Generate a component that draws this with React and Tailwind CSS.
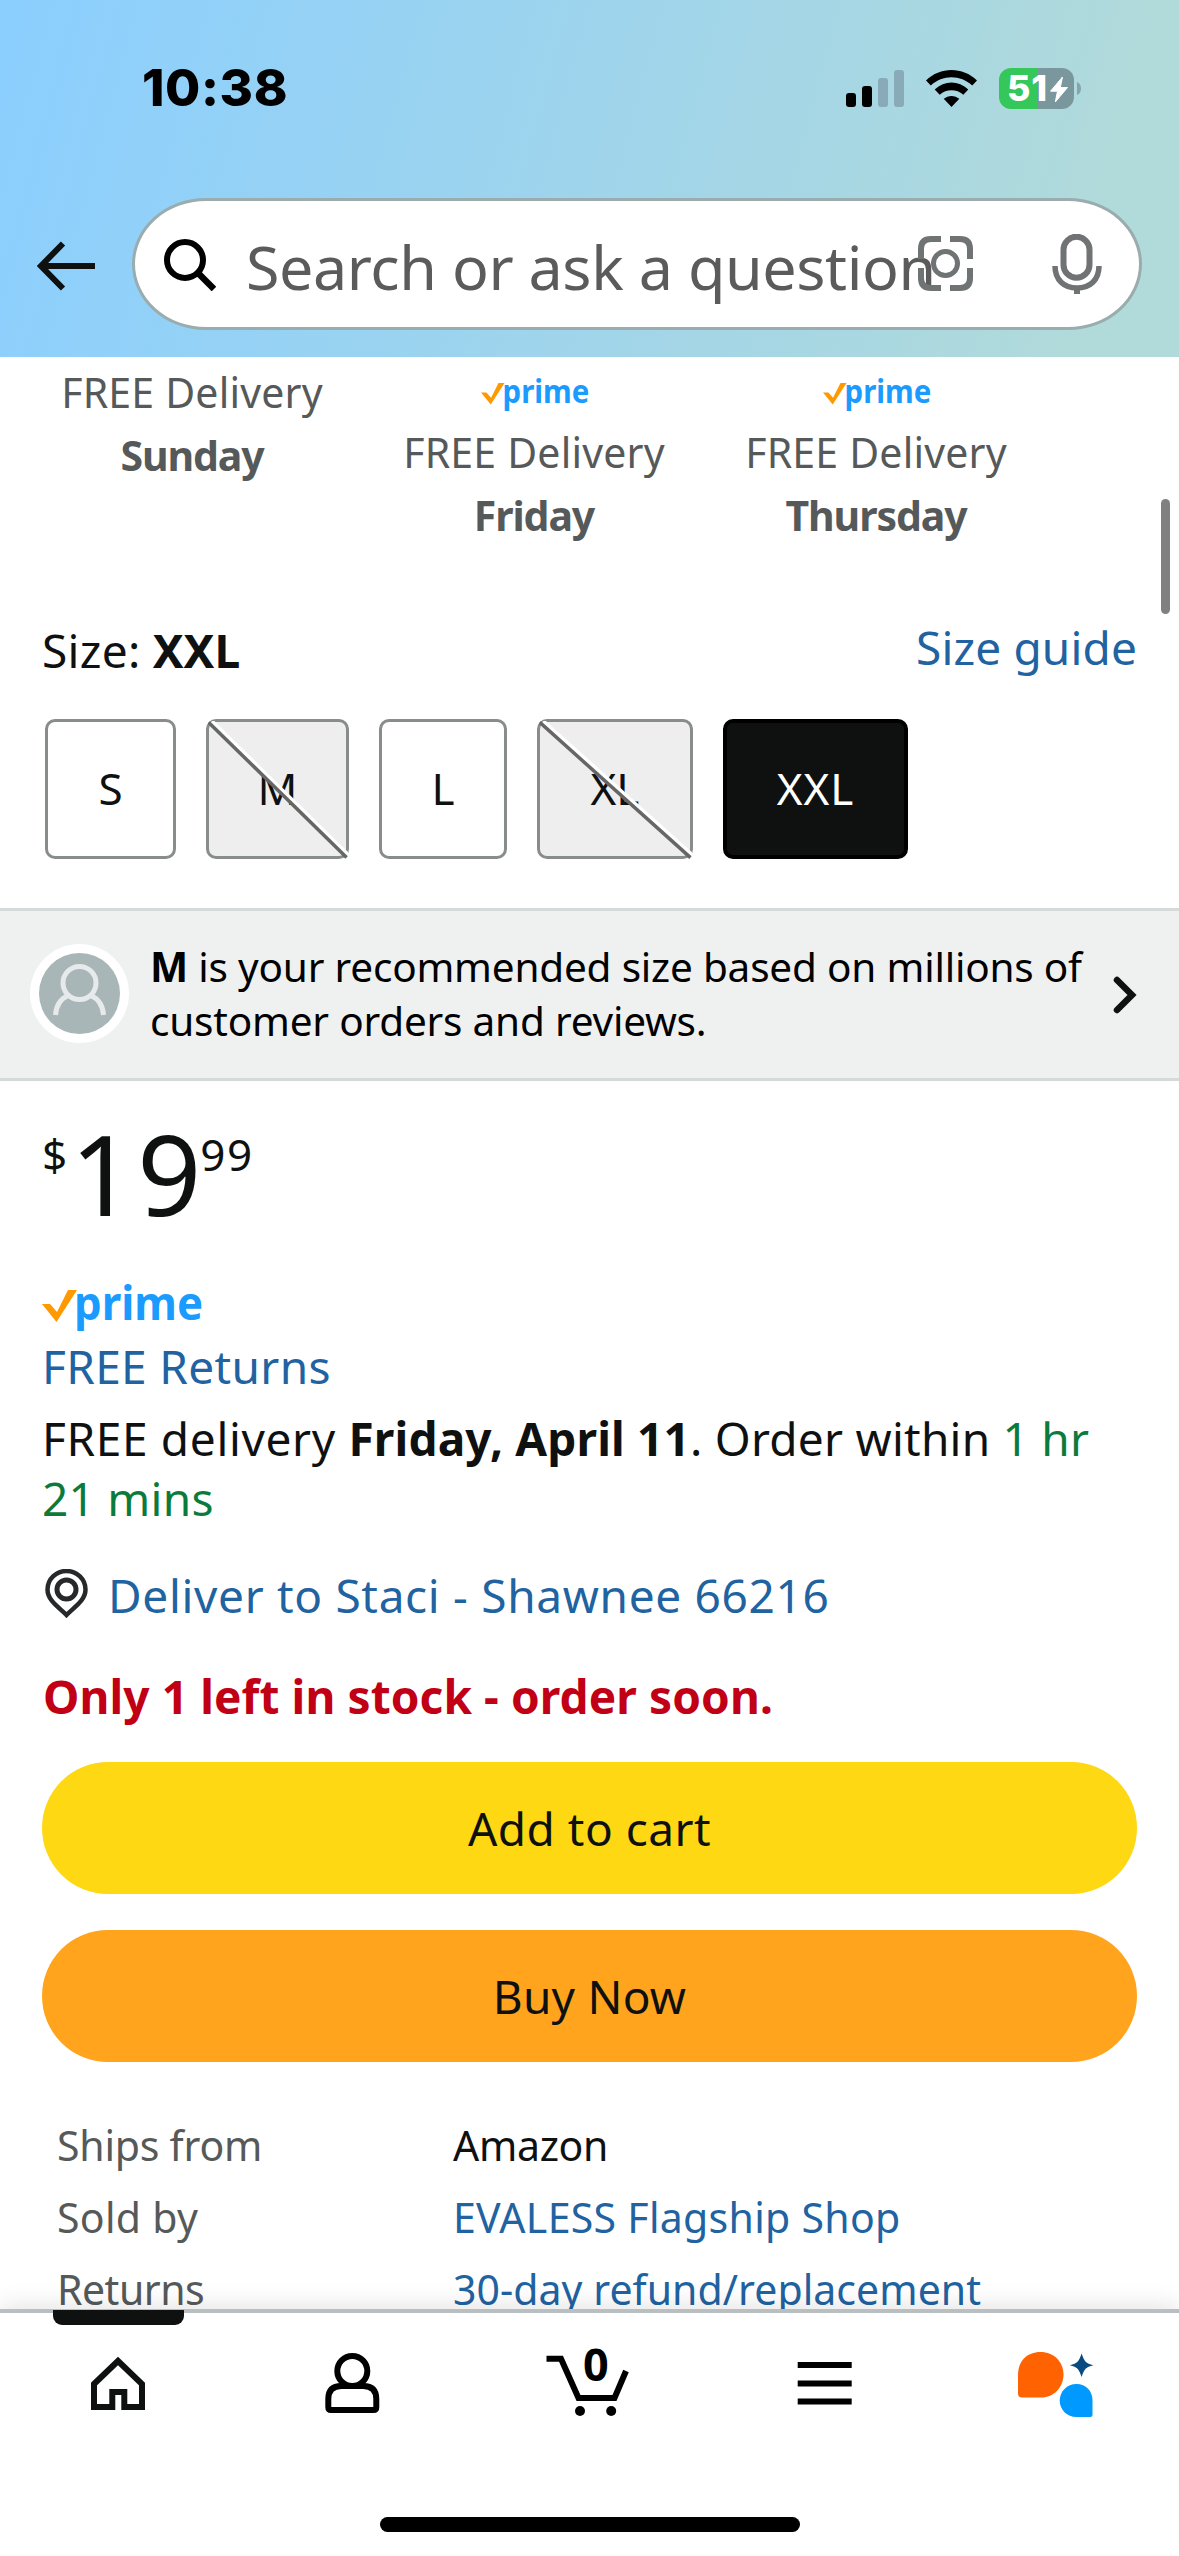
const sizes = [
  { label: 'S', width: 'w-[131px]', state: 'available' },
  { label: 'M', width: 'w-[143px]', state: 'unavailable' },
  { label: 'L', width: 'w-[128px]', state: 'available' },
  { label: 'XL', width: 'w-[156px]', state: 'unavailable' },
  { label: 'XXL', width: 'w-[185px]', state: 'selected' },
];

const sizeStyles = {
  available: 'border-[3px] border-[#888c8c] bg-white text-[#0f1111]',
  unavailable: 'border-[3px] border-[#888c8c] bg-[#eeeeee] text-[#0f1111]',
  selected: 'border-4 border-black bg-[#0f1111] text-white tracking-[1px]',
};

function PrimeLogo({ className }) {
  return (
    <svg className={`overflow-visible ${className}`} viewBox="0 0 159 46">
      <path d="M0 20h8l7 8L26 6h9L14.500 38z" fill="#ff9900" />
      <text
        x="32"
        y="36"
        fontFamily="'Noto Sans', sans-serif"
        fontWeight="700"
        fontSize="47"
        fill="#1c9bff"
        textLength="129"
        lengthAdjust="spacingAndGlyphs"
      >
        prime
      </text>
    </svg>
  );
}

function StatusBar() {
  return (
    <div className="flex h-[60px] items-center pl-[142px] pr-[98px]">
      <span className="font-['Inter',sans-serif] text-[51px] font-extrabold leading-[60px] tracking-[0.6px] text-black">10:38</span>
      <svg className="ml-auto h-[37px] w-[58px]" viewBox="0 0 58 37">
        <rect x="0" y="23" width="10" height="14" rx="3" />
        <rect x="16" y="16" width="10" height="21" rx="3" />
        <rect x="32" y="8" width="10" height="29" rx="3" fill="#88abb7" />
        <rect x="48" y="0" width="10" height="37" rx="3" fill="#88abb7" />
      </svg>
      <svg className="ml-[22px] h-[37px] w-[51px]" viewBox="0 0 51 37">
        <path d="M0 10.500C14-3.500 37-3.500 51 10.500L46.200 15.500C34.500 4.500 16.500 4.500 4.800 15.500z" />
        <path d="M8.700 19.500C18.500 10.300 32.500 10.300 42.300 19.500L37.300 24.700C30.500 18.800 20.500 18.800 13.700 24.700z" />
        <path d="M17.700 28.800C22.200 24.900 28.800 24.900 33.300 28.800L25.500 37z" />
      </svg>
      <div className="relative ml-[22px] flex h-[41px] w-[75px] items-center overflow-hidden rounded-[12px] bg-[linear-gradient(90deg,#34c759_51%,#7a979d_51%)] pl-[8px]">
        <span className="font-['Inter',sans-serif] text-[36px] font-extrabold leading-[41px] tracking-[0.8px] text-white">51</span>
        <svg className="absolute left-[51px] top-[9px] h-[25px] w-[18px]" viewBox="0 0 17 25">
          <path d="M12 0L0 14.200h7L4.800 25 17 10.500H9.800z" fill="#fff" stroke="#fff" />
        </svg>
      </div>
      <svg className="ml-[3px] h-[13px] w-[4px]" viewBox="0 0 4 13">
        <path d="M0 0C5.300 2 5.300 11 0 13z" fill="#86a5aa" />
      </svg>
    </div>
  );
}

function SearchBar() {
  return (
    <div className="mt-[80px] flex h-[132px] items-center pl-[37px]">
      <svg className="mt-[4px] h-[50px] w-[58px] shrink-0" viewBox="0 0 58 50" fill="none" stroke="#0f1111" strokeWidth="6">
        <path d="M26 2.500L4 25l22 22.500M3 25h55" />
      </svg>
      <div className="ml-[37px] flex h-[132px] w-[1010px] items-center rounded-[74px/66px] border-[3px] border-[#9aacad] bg-white pl-[29px]">
        <svg className="mt-[2px] h-[52px] w-[52px] shrink-0" viewBox="0 0 52 52" fill="none" stroke="#000" strokeWidth="6">
          <circle cx="21" cy="21" r="18" />
          <path d="M34 34l16 16" strokeWidth="6.500" />
        </svg>
        <span className="ml-[30px] w-[672px] shrink-0 whitespace-nowrap pt-[5px] text-[61px] leading-[80px] tracking-[-0.43px] text-[#5b5b5b]">
          Search or ask a question
        </span>
        <svg className="mb-[2px] h-[55px] w-[55px] shrink-0" viewBox="0 0 55 55" fill="none" stroke="#6f7373" strokeWidth="6">
          <path d="M23 3H13Q3 3 3 13v10M32 3h10q10 0 10 10v10M23 52H13Q3 52 3 42V32M32 52h10q10 0 10-10V32" />
          <circle cx="27.500" cy="27.500" r="12" strokeWidth="5" />
        </svg>
        <svg className="ml-[79px] h-[60px] w-[50px] shrink-0" viewBox="0 0 50 60" fill="none" stroke="#6f7373">
          <rect x="11.500" y="2.700" width="26" height="41" rx="13" strokeWidth="6" />
          <path d="M3 32c0 14 9 22 22 22s22-8 22-22" strokeWidth="5.500" />
          <path d="M25 53v7" strokeWidth="6" />
        </svg>
      </div>
    </div>
  );
}

function DeliveryOption({ prime, day }) {
  return (
    <div className="w-[342px] text-center text-[41px] leading-[63px] text-[#565959]">
      {prime && (
        <div className="flex h-[60px] justify-center pt-[18px]">
          <PrimeLogo className="h-[31px] w-[107px]" />
        </div>
      )}
      <div className="tracking-[0.2px]">FREE Delivery</div>
      <div className="font-bold tracking-[-1.1px]">{day}</div>
    </div>
  );
}

function SizeButton({ label, width, state }) {
  return (
    <button className={`relative h-[140px] rounded-[10px] pb-[3px] text-[44px] leading-[60px] ${width} ${sizeStyles[state]}`}>
      {label}
      {state === 'unavailable' && (
        <svg className="absolute -left-px -top-px h-[138px] w-[calc(100%+3px)]" viewBox="0 0 100 100" preserveAspectRatio="none" fill="none">
          <path d="M2.500 0.500L100 97.500" stroke="#fff" strokeWidth="5" vectorEffect="non-scaling-stroke" />
          <path d="M0.500 1L99 99" stroke="#666" strokeWidth="3.500" vectorEffect="non-scaling-stroke" />
        </svg>
      )}
    </button>
  );
}

function SizeBanner() {
  return (
    <div className="mt-[49px] flex h-[173px] items-center border-y-[3px] border-[#d5d9d9] bg-[#eff1f1] pl-[30px]">
      <svg className="mb-[2px] h-[99px] w-[99px] shrink-0" viewBox="0 0 99 99" fill="none">
        <circle cx="49.500" cy="49.500" r="49.500" fill="#fff" />
        <circle cx="49.500" cy="49.500" r="40.500" fill="#a9b6b7" />
        <g stroke="#e6eaea" strokeWidth="5">
          <circle cx="49.500" cy="39" r="16.500" />
          <path d="M25.500 71c.6-9 5-16 12.500-19.500M73.500 71c-.6-9-5-16-12.500-19.500" />
        </g>
      </svg>
      <p className="ml-[21px] pb-[2px] text-[40.5px] leading-[54px] tracking-[-0.2px] text-black">
        <b>M</b> is your recommended size based on millions of
        <br />
        customer orders and reviews.
      </p>
      <svg className="ml-auto mr-[42px] h-[38px] w-[24px]" viewBox="0 0 24 38" fill="none" stroke="#0f1111" strokeWidth="6.500" strokeLinecap="round">
        <path d="M4 4l15 15L4 34" />
      </svg>
    </div>
  );
}

function Offer() {
  return (
    <div className="px-[42px] text-[46px] leading-[60px] text-[#0f1111]">
      <div className="mt-[36px] flex h-[112px] items-start">
        <span className="pt-[15px] text-[44px] leading-[44px]">$</span>
        <span className="ml-[3px] text-[112px] font-[450] leading-[112px] tracking-[3px]">19</span>
        <span className="-ml-[4px] pt-[15px] text-[44px] leading-[44px] tracking-[1.5px]">99</span>
      </div>
      <PrimeLogo className="mt-[55px] h-[46px] w-[159px]" />
      <div className="mt-[6px] tracking-[0.35px] text-[#2162a1]">FREE Returns</div>
      <div className="mt-[12px] whitespace-nowrap tracking-[0.25px]">
        <span className="tracking-[0.65px]">FREE delivery </span>
        <b className="tracking-[0.15px]">Friday, April 11</b>. Order within <span className="text-[#0b7b3c]">1 hr<br />21 mins</span>
      </div>
      <div className="mt-[37px] flex items-start">
        <svg className="ml-[3px] mt-[4px] h-[49px] w-[43px]" viewBox="0 0 43 49" fill="none" stroke="#26292a">
          <path d="M21.500 46C15 39 2.500 32 2.500 20.500a19 18.500 0 0 1 38 0C40.500 32 28 39 21.500 46z" strokeWidth="4.500" />
          <circle cx="21.500" cy="20.500" r="9.500" strokeWidth="5" />
        </svg>
        <span className="ml-[20px] tracking-[0.68px] text-[#2162a1]">Deliver to Staci - Shawnee 66216</span>
      </div>
      <div className="mt-[41px] pl-px font-bold tracking-[0.1px] text-[#c10015]">Only 1 left in stock - order soon.</div>
      <button className="mt-[36px] block h-[132px] w-full rounded-full bg-[#fed813] tracking-[0.48px]">Add to cart</button>
      <button className="mt-[36px] block h-[132px] w-full rounded-full bg-[#ffa41c] tracking-[0.23px]">Buy Now</button>
      <dl className="mt-[47px] grid grid-cols-[396px_1fr] pl-[15px] text-[41px] leading-[72px]">
        <dt className="tracking-[-0.22px] text-[#565959]">Ships from</dt>
        <dd className="tracking-[-0.3px]">Amazon</dd>
        <dt className="tracking-[0.31px] text-[#565959]">Sold by</dt>
        <dd className="tracking-[0.3px] text-[#2162a1]">EVALESS Flagship Shop</dd>
        <dt className="tracking-[-0.51px] text-[#565959]">Returns</dt>
        <dd className="tracking-[0.05px] text-[#2162a1]">30-day refund/replacement</dd>
      </dl>
    </div>
  );
}

function TabBar() {
  return (
    <nav className="relative flex h-[247px] shrink-0 flex-col items-center border-t-4 border-[#b9bfc0] bg-white shadow-[0_-2px_24px_rgba(15,17,17,0.12)]">
      <div className="absolute -top-[3px] left-[53px] h-[15px] w-[131px] rounded-b-[9px] bg-[#0f1111]" />
      <div className="grid w-full grid-cols-5 justify-items-center pt-[30px]">
        <svg className="h-[80px] w-[90px]" viewBox="0 0 90 80" fill="none" stroke="#0f1111" strokeWidth="6">
          <path d="M21 41L45 18l24 23v23H51.300V49H39.300v15H21z" />
        </svg>
        <svg className="h-[80px] w-[90px]" viewBox="0 0 90 80" fill="none" stroke="#000" strokeWidth="6">
          <ellipse cx="43.300" cy="28" rx="15" ry="15" />
          <path d="M22 67h42.600q2.700 0 2.700-3v-8q0-13-13-13h-22q-13 0-13 13v8q0 3 2.700 3z" />
        </svg>
        <svg className="h-[80px] w-[90px]" viewBox="0 0 90 80">
          <path d="M2.500 15.700h14.500L34.500 55h36L82 28" fill="none" stroke="#000" strokeWidth="6" />
          <circle cx="36" cy="68" r="5" />
          <circle cx="67.200" cy="68" r="5" />
          <text x="51.800" y="37.500" textAnchor="middle" fontFamily="'Noto Sans', sans-serif" fontWeight="700" fontSize="45">0</text>
        </svg>
        <svg className="h-[80px] w-[90px]" viewBox="0 0 90 80" stroke="#000" strokeWidth="6">
          <path d="M17.700 22h54M17.700 40.500h54M17.700 58.500h54" />
        </svg>
        <svg className="h-[80px] w-[90px]" viewBox="0 0 90 80">
          <path d="M2 32C2 18 11 9 24.500 9S47.500 19 47.500 31.500 38 54.500 25 54.500H6Q2 54.500 2 50.500z" fill="#ff6200" />
          <path d="M76.500 57.500C76.500 48 70 41 60.500 41S43.700 48.500 43.700 57.500 51 74 60.500 74H74q2.500 0 2.500-2.500z" fill="#0099ff" />
          <path d="M65.600 10.500C68.500 19 69.500 20 77.500 22.200 69.500 24.500 68.500 25.500 65.600 34 62.700 25.500 61.700 24.500 53.800 22.200 61.700 20 62.700 19 65.600 10.500z" fill="#084b83" />
        </svg>
      </div>
      <div className="mt-[94px] h-[15px] w-[420px] rounded-full bg-black" />
    </nav>
  );
}

export default function App() {
  return (
    <div className="relative flex h-[2556px] w-[1179px] flex-col overflow-hidden bg-white font-['Noto_Sans',sans-serif]">
      <header className="h-[357px] shrink-0 bg-[linear-gradient(105deg,#8bcfff_0%,#9ed4ec_48%,#b1dada_92%)] pt-[58px]">
        <StatusBar />
        <SearchBar />
      </header>

      <main className="h-[1952px] shrink-0 overflow-hidden">
        <div className="flex h-[189px] pl-[21px] pt-[4px]">
          <DeliveryOption day="Sunday" />
          <DeliveryOption day="Friday" prime />
          <DeliveryOption day="Thursday" prime />
        </div>
        <div className="mt-[74px] flex justify-between px-[42px] text-[46px] leading-[60px] text-[#0f1111]">
          <div className="tracking-[0.3px]">
            Size: <b className="tracking-normal">XXL</b>
          </div>
          <div className="-mt-[3px] tracking-[0.15px] text-[#2162a1]">Size guide</div>
        </div>
        <div className="mt-[39px] flex gap-[30px] pl-[45px]">
          {sizes.map((size) => (
            <SizeButton key={size.label} {...size} />
          ))}
        </div>
        <SizeBanner />
        <Offer />
      </main>

      <TabBar />

      {/* scroll indicator */}
      <div className="absolute left-[1161px] top-[499px] h-[115px] w-[9px] rounded-full bg-[#808080]" />
    </div>
  );
}
